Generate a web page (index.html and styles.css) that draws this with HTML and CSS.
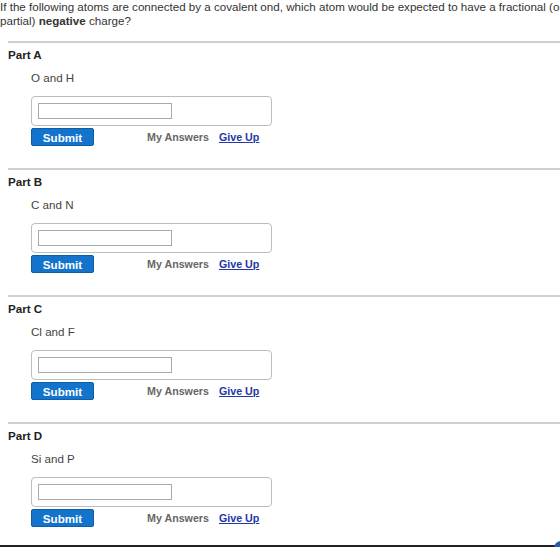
FILE: index.html
```html
<!DOCTYPE html>
<html>
<head>
    <link rel="stylesheet" href="styles.css">
</head>
<body>
    <div class="page">
        <p class="intro">If the following atoms are connected by a covalent ond, which atom would be expected to have a fractional (or partial) <b>negative</b> charge?</p>

        <div class="part">
            <h2>Part A</h2>
            <p class="atoms">O and H</p>
            <div class="answer-box"><input type="text" class="answer"></div>
            <div class="actions">
                <button>Submit</button>
                <span class="my-answers">My Answers</span>
                <a href="#" class="give-up">Give Up</a>
            </div>
        </div>

        <div class="part">
            <h2>Part B</h2>
            <p class="atoms">C and N</p>
            <div class="answer-box"><input type="text" class="answer"></div>
            <div class="actions">
                <button>Submit</button>
                <span class="my-answers">My Answers</span>
                <a href="#" class="give-up">Give Up</a>
            </div>
        </div>

        <div class="part">
            <h2>Part C</h2>
            <p class="atoms">Cl and F</p>
            <div class="answer-box"><input type="text" class="answer"></div>
            <div class="actions">
                <button>Submit</button>
                <span class="my-answers">My Answers</span>
                <a href="#" class="give-up">Give Up</a>
            </div>
        </div>

        <div class="part">
            <h2>Part D</h2>
            <p class="atoms">Si and P</p>
            <div class="answer-box"><input type="text" class="answer"></div>
            <div class="actions">
                <button>Submit</button>
                <span class="my-answers">My Answers</span>
                <a href="#" class="give-up">Give Up</a>
            </div>
        </div>
    </div>
    <div class="bottom-bar"></div>
    <div class="help-dot"></div>
</body>
</html>
```

FILE: styles.css
```css
html, body {
    margin: 0;
    height: 100%;
    overflow: hidden;
    background: #fff;
}

body {
    font-family: "Liberation Sans", Arial, sans-serif;
    font-size: 11.6px;
    color: #333;
}

.page {
    width: 620px;
}

.intro {
    margin: 0;
    width: 585px;
    line-height: 14px;
}

.part {
    border-top: 2px solid #d0d0d0;
    margin-left: 8px;
}

.intro + .part {
    margin-top: 13px;
}

h2 {
    margin: 4px 0 0 0;
    font-size: 11.6px;
    line-height: 16px;
    color: #222;
}

.atoms {
    margin: 7px 0 0 23px;
    line-height: 16px;
    color: #444;
}

.answer-box {
    margin: 10px 0 0 23px;
    width: 233px;
    height: 28px;
    border: 1px solid #bdbdbd;
    border-radius: 4px;
    display: flex;
    align-items: center;
    padding-left: 6px;
}

.answer {
    width: 130px;
    height: 12px;
    border: 1px solid #aaa;
    margin: 0;
    padding: 1px;
}

.actions {
    margin: 2px 0 22px 23px;
    display: flex;
    align-items: center;
    height: 18px;
}

button {
    width: 63px;
    height: 18px;
    background: #1474cc;
    border: 1px solid #0d5ea8;
    border-radius: 2px;
    color: #fff;
    font-family: "Liberation Sans", Arial, sans-serif;
    font-weight: bold;
    font-size: 11.6px;
    padding: 0;
}

.my-answers {
    margin-left: 53px;
    font-weight: bold;
    font-size: 10.7px;
    color: #666;
}

.give-up {
    margin-left: 10px;
    font-weight: bold;
    font-size: 10.7px;
    color: #2438a8;
}

.bottom-bar {
    position: fixed;
    left: 0;
    right: 0;
    bottom: 0;
    height: 2px;
    background: #222;
}

.help-dot {
    position: fixed;
    right: -8px;
    bottom: -8px;
    width: 14px;
    height: 14px;
    border-radius: 50%;
    background: #2a5aa8;
}
```
